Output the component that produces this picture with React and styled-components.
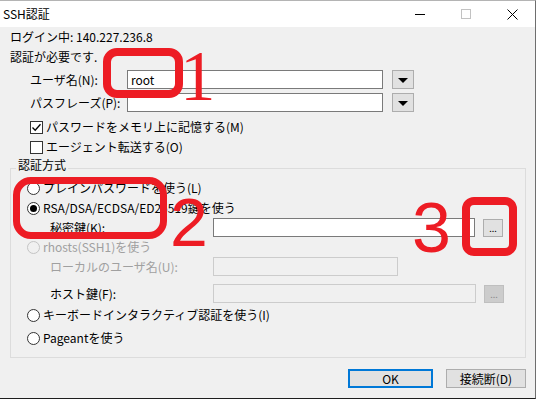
import React from 'react';
import styled, { createGlobalStyle } from 'styled-components';

const Global = createGlobalStyle`
  html, body { margin: 0; padding: 0; background: #ffffff; }
  body {
    font-family: "Noto Sans CJK JP", "Noto Sans", sans-serif;
    font-size: 12px;
    color: #000;
  }
  * { box-sizing: border-box; }
`;

const Page = styled.div`
  position: relative;
  width: 537px;
  height: 399px;
  overflow: hidden;
`;

const Window = styled.div`
  width: 536px;
  height: 399px;
  border-top: 1px solid #b4b4b4;
  border-right: 1px solid #6e6e6e;
  border-bottom: 1px solid #1e1e1e;
  background: #f0f0f0;
  display: flex;
  flex-direction: column;
`;

const TitleBar = styled.div`
  height: 26px;
  background: #fff;
  display: flex;
  align-items: center;
  flex: none;
`;

const Title = styled.div`
  flex: 1;
  padding-left: 3px;
  font-size: 12px;
  line-height: 16px;
`;

const CaptionButton = styled.div`
  width: 46px;
  height: 26px;
  display: flex;
  align-items: center;
  justify-content: center;
`;

const Body = styled.div`
  display: flex;
  flex-direction: column;
  padding: 0 9px 0 10px;
`;

const Row = styled.div`
  display: flex;
  align-items: center;
  height: ${p => p.$h || 20}px;
  margin-top: ${p => p.$mt || 0}px;
  padding-left: ${p => p.$indent || 0}px;
  color: ${p => (p.$disabled ? '#a0a0a0' : '#000')};
  white-space: nowrap;
`;

const Label = styled.span`
  width: ${p => p.$w}px;
  flex: none;
  line-height: 16px;
`;

const Text = styled.span`
  line-height: 16px;
`;

const Input = styled.div`
  width: ${p => p.$w}px;
  height: 19px;
  flex: none;
  border: 1px solid ${p => (p.$disabled ? '#cccccc' : '#7a7a7a')};
  background: ${p => (p.$disabled ? '#f0f0f0' : '#fff')};
  padding-left: 3px;
  display: flex;
  align-items: center;
  line-height: 16px;
`;

const DropButton = styled.div`
  width: 22px;
  height: 19px;
  margin-left: 9px;
  border: 1px solid #adadad;
  background: #e1e1e1;
  display: flex;
  align-items: center;
  justify-content: center;
`;

const Triangle = styled.div`
  width: 0;
  height: 0;
  border-left: 5px solid transparent;
  border-right: 5px solid transparent;
  border-top: 5px solid #000;
  margin-top: 1px;
`;

const BrowseButton = styled.div`
  width: 20px;
  height: 18px;
  margin-left: 8px;
  border: 1px solid ${p => (p.$disabled ? '#bfbfbf' : '#adadad')};
  background: ${p => (p.$disabled ? '#cccccc' : '#e1e1e1')};
  color: ${p => (p.$disabled ? '#8a8a8a' : '#000')};
  font-size: 9px;
  display: flex;
  align-items: flex-end;
  justify-content: center;
  padding-bottom: 3px;
  line-height: 9px;
`;

const CheckBoxBox = styled.span`
  width: 13px;
  height: 13px;
  flex: none;
  border: 1px solid #333;
  background: #fff;
  margin-right: 3px;
  display: flex;
  align-items: center;
  justify-content: center;
`;

const RadioCircle = styled.span`
  width: 13px;
  height: 13px;
  flex: none;
  border-radius: 50%;
  border: 1px solid ${p => (p.$disabled ? '#c4c4c4' : '#333')};
  background: ${p => (p.$disabled ? '#f0f0f0' : '#fff')};
  margin-right: 3px;
  display: flex;
  align-items: center;
  justify-content: center;
  &::after {
    content: '';
    display: ${p => (p.$checked ? 'block' : 'none')};
    width: 7px;
    height: 7px;
    border-radius: 50%;
    background: #000;
  }
`;

const GroupBox = styled.div`
  position: relative;
  width: 516px;
  height: 190px;
  margin-top: 11px;
  border: 1px solid #dcdcdc;
  display: flex;
  flex-direction: column;
  padding-top: 9px;
`;

const GroupTitle = styled.span`
  position: absolute;
  left: 5px;
  top: -12px;
  padding: 0 2px;
  background: #f0f0f0;
  line-height: 16px;
`;

const ButtonRow = styled.div`
  display: flex;
  justify-content: flex-end;
  gap: 13px;
  margin-top: 11px;
`;

const PushButton = styled.div`
  width: ${p => p.$w}px;
  height: 19px;
  background: #e1e1e1;
  border: ${p => (p.$default ? '2px solid #0078d7' : '1px solid #adadad')};
  display: flex;
  align-items: center;
  justify-content: center;
  line-height: 16px;
`;

const RedBox = styled.div`
  position: absolute;
  left: ${p => p.$x}px;
  top: ${p => p.$y}px;
  width: ${p => p.$w}px;
  height: ${p => p.$h}px;
  border: ${p => p.$t || 8}px solid #ed1c24;
  border-radius: ${p => p.$r}px;
`;

const RedDigit = styled.span`
  position: absolute;
  left: ${p => p.$x}px;
  top: ${p => p.$y}px;
  font-family: ${p => (p.$serif ? '"Liberation Serif", serif' : '"Liberation Sans", sans-serif')};
  font-size: ${p => p.$size}px;
  line-height: 1;
  color: #ed1c24;
`;

const CheckBox = ({ checked, children }) => (
  <Row $h={20} $indent={20}>
    <CheckBoxBox>
      {checked && (
        <svg width="11" height="11" viewBox="0 0 11 11">
          <path d="M1.5 5.5 L4.2 8.3 L9.5 2.3" fill="none" stroke="#000" strokeWidth="1.3" />
        </svg>
      )}
    </CheckBoxBox>
    <Text>{children}</Text>
  </Row>
);

const Radio = ({ checked, disabled, mt, children }) => (
  <Row $h={20} $indent={16} $mt={mt} $disabled={disabled}>
    <RadioCircle $checked={checked} $disabled={disabled} />
    <Text>{children}</Text>
  </Row>
);

export default function App() {
  return (
    <>
      <Global />
      <Page>
        <Window>
          <TitleBar>
            <Title>SSH認証</Title>
            <CaptionButton>
              <svg width="10" height="10" viewBox="0 0 10 10">
                <path d="M0 5.5 H10" stroke="#000" strokeWidth="1" />
              </svg>
            </CaptionButton>
            <CaptionButton>
              <svg width="10" height="10" viewBox="0 0 10 10">
                <rect x="0.5" y="0.5" width="9" height="9" fill="none" stroke="#c2c2c2" strokeWidth="1" />
              </svg>
            </CaptionButton>
            <CaptionButton>
              <svg width="11" height="11" viewBox="0 0 11 11">
                <path d="M0.5 0.5 L10.5 10.5 M10.5 0.5 L0.5 10.5" stroke="#000" strokeWidth="1" />
              </svg>
            </CaptionButton>
          </TitleBar>
          <Body>
            <Row $h={20}>
              <Text>ログイン中: 140.227.236.8</Text>
            </Row>
            <Row $h={20}>
              <Text>認証が必要です.</Text>
            </Row>
            <Row $h={19} $mt={3} $indent={20}>
              <Label $w={97}>ユーザ名(N):</Label>
              <Input $w={256}>root</Input>
              <DropButton><Triangle /></DropButton>
            </Row>
            <Row $h={19} $mt={4} $indent={20}>
              <Label $w={97}>パスフレーズ(P):</Label>
              <Input $w={256} />
              <DropButton><Triangle /></DropButton>
            </Row>
            <Row $h={5} />
            <CheckBox checked>パスワードをメモリ上に記憶する(M)</CheckBox>
            <CheckBox>エージェント転送する(O)</CheckBox>
            <GroupBox>
              <GroupTitle>認証方式</GroupTitle>
              <Radio>プレインパスワードを使う(L)</Radio>
              <Radio checked>RSA/DSA/ECDSA/ED25519鍵を使う</Radio>
              <Row $h={19} $indent={39}>
                <Label $w={163}>秘密鍵(K):</Label>
                <Input $w={262} />
                <BrowseButton>...</BrowseButton>
              </Row>
              <Radio disabled>rhosts(SSH1)を使う</Radio>
              <Row $h={19} $indent={39} $disabled>
                <Label $w={163}>ローカルのユーザ名(U):</Label>
                <Input $w={185} $disabled />
              </Row>
              <Row $h={19} $mt={8} $indent={39}>
                <Label $w={163}>ホスト鍵(F):</Label>
                <Input $w={263} $disabled />
                <BrowseButton $disabled>...</BrowseButton>
              </Row>
              <Radio mt={2}>キーボードインタラクティブ認証を使う(I)</Radio>
              <Radio mt={3}>Pageantを使う</Radio>
            </GroupBox>
            <ButtonRow>
              <PushButton $w={85} $default>OK</PushButton>
              <PushButton $w={80}>接続断(D)</PushButton>
            </ButtonRow>
          </Body>
        </Window>
        <RedBox $x={103} $y={48} $w={80} $h={50} $r={14} />
        <RedDigit $serif $x={180} $y={41} $size={71}>1</RedDigit>
        <RedBox $x={13} $y={177} $w={154} $h={62} $t={7} $r={18} />
        <RedDigit $x={170} $y={188} $size={68}>2</RedDigit>
        <RedDigit $x={412} $y={193} $size={70}>3</RedDigit>
        <RedBox $x={462} $y={197} $w={55} $h={59} $r={12} />
      </Page>
    </>
  );
}
